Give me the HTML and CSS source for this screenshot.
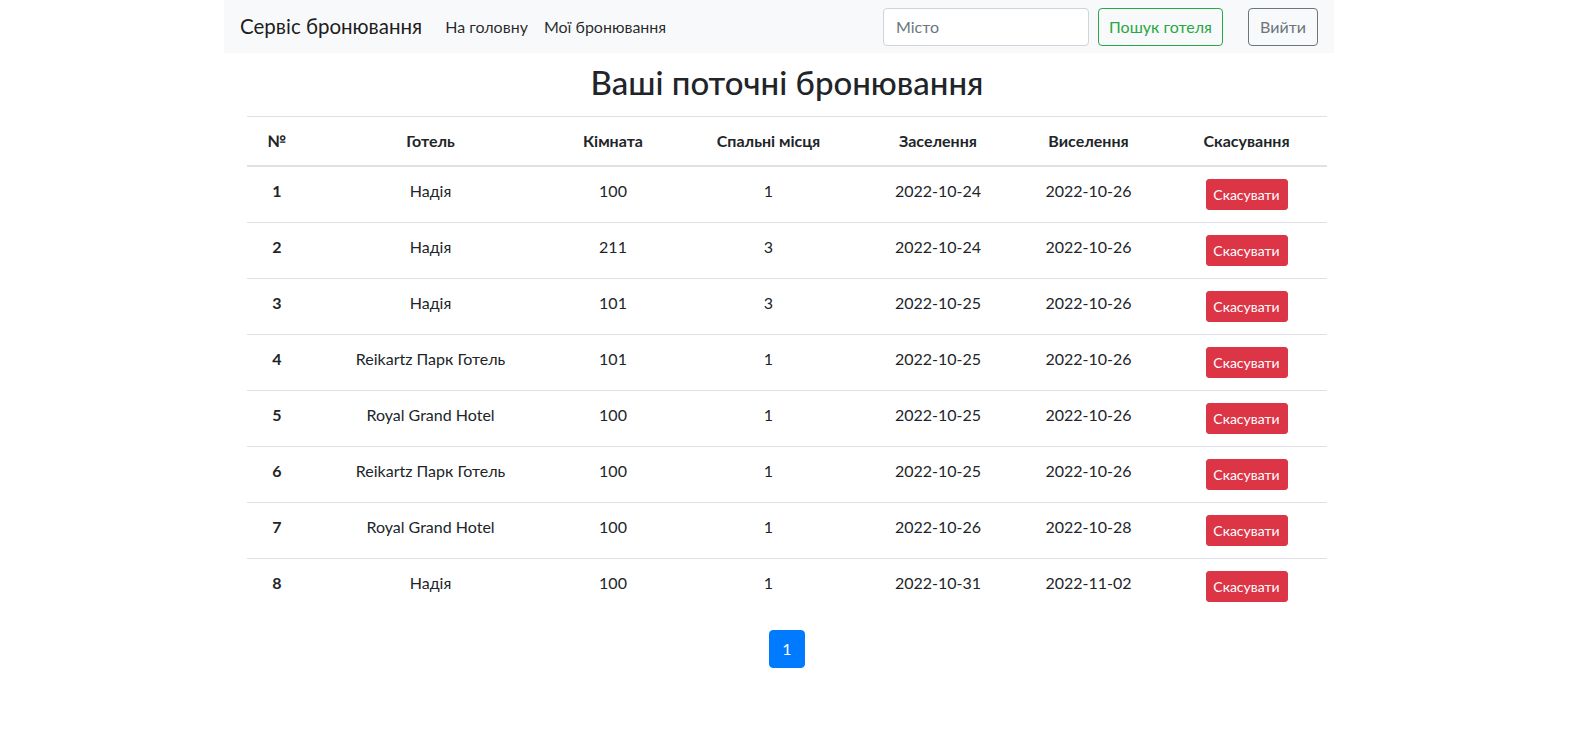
FILE: index.html
```html
<!DOCTYPE html>
<html lang="uk">
<head>
<meta charset="utf-8">
<title>Мої бронювання</title>
<link rel="stylesheet" href="styles.css">
</head>
<body>
<nav class="navbar">
  <a class="brand" href="#">Сервіс бронювання</a>
  <ul class="nav-links">
    <li><a href="#">На головну</a></li>
    <li><a href="#">Мої бронювання</a></li>
  </ul>
  <form class="search">
    <input class="field" type="text" placeholder="Місто">
    <button class="btn btn-success" type="button">Пошук готеля</button>
  </form>
  <button class="btn btn-secondary" type="button">Вийти</button>
</nav>

<main class="content">
  <h2 class="title">Ваші поточні бронювання</h2>
  <table class="bookings">
    <colgroup>
      <col class="c-num"><col class="c-hotel"><col class="c-room"><col class="c-beds"><col class="c-in"><col class="c-out"><col class="c-cancel">
    </colgroup>
    <thead>
      <tr><th>№</th><th>Готель</th><th>Кімната</th><th>Спальні місця</th><th>Заселення</th><th>Виселення</th><th>Скасування</th></tr>
    </thead>
    <tbody>
      <tr><th>1</th><td>Надія</td><td>100</td><td>1</td><td>2022-10-24</td><td>2022-10-26</td><td><button class="btn-cancel" type="button">Скасувати</button></td></tr>
      <tr><th>2</th><td>Надія</td><td>211</td><td>3</td><td>2022-10-24</td><td>2022-10-26</td><td><button class="btn-cancel" type="button">Скасувати</button></td></tr>
      <tr><th>3</th><td>Надія</td><td>101</td><td>3</td><td>2022-10-25</td><td>2022-10-26</td><td><button class="btn-cancel" type="button">Скасувати</button></td></tr>
      <tr><th>4</th><td>Reikartz Парк Готель</td><td>101</td><td>1</td><td>2022-10-25</td><td>2022-10-26</td><td><button class="btn-cancel" type="button">Скасувати</button></td></tr>
      <tr><th>5</th><td>Royal Grand Hotel</td><td>100</td><td>1</td><td>2022-10-25</td><td>2022-10-26</td><td><button class="btn-cancel" type="button">Скасувати</button></td></tr>
      <tr><th>6</th><td>Reikartz Парк Готель</td><td>100</td><td>1</td><td>2022-10-25</td><td>2022-10-26</td><td><button class="btn-cancel" type="button">Скасувати</button></td></tr>
      <tr><th>7</th><td>Royal Grand Hotel</td><td>100</td><td>1</td><td>2022-10-26</td><td>2022-10-28</td><td><button class="btn-cancel" type="button">Скасувати</button></td></tr>
      <tr><th>8</th><td>Надія</td><td>100</td><td>1</td><td>2022-10-31</td><td>2022-11-02</td><td><button class="btn-cancel" type="button">Скасувати</button></td></tr>
    </tbody>
  </table>
  <ul class="pagination">
    <li><a class="page-link active" href="#">1</a></li>
  </ul>
</main>
</body>
</html>
```
FILE: styles.css
```css
* { box-sizing: border-box; }

body {
  margin: 0;
  font-family: Lato, "Noto Sans", sans-serif;
  font-size: 16px;
  line-height: 1.5;
  color: #212529;
  background: #fff;
}

a { text-decoration: none; }

/* Navbar */
.navbar {
  width: 1110px;
  height: 53px;
  margin-left: 224px;
  padding: 0 16px;
  background: #f8f9fa;
  display: flex;
  align-items: center;
}

.brand {
  font-size: 20.5px;
  line-height: 30px;
  color: rgba(0, 0, 0, 0.9);
  margin-right: 15px;
  padding-bottom: 2px;
  white-space: nowrap;
}

.nav-links {
  list-style: none;
  margin: 0;
  padding: 0;
  display: flex;
}

.nav-links a {
  display: block;
  padding: 8px 8px;
  color: rgba(0, 0, 0, 0.85);
  font-size: 16px;
  white-space: nowrap;
}

.search {
  margin: 0 0 0 auto;
  display: flex;
  align-items: center;
  gap: 9px;
}

.field {
  width: 206px;
  height: 38px;
  padding: 6px 12px;
  font: inherit;
  font-size: 16px;
  color: #495057;
  background: #fff;
  border: 1px solid #ced4da;
  border-radius: 4px;
}

.field::placeholder { color: #6c757d; }

.btn {
  height: 38px;
  padding: 6px 0;
  font: inherit;
  font-size: 16px;
  line-height: 24px;
  text-align: center;
  white-space: nowrap;
  background: transparent;
  border: 1px solid;
  border-radius: 4px;
  cursor: pointer;
}

.btn-success {
  color: #28a745;
  border-color: #28a745;
  width: 125px;
}

.btn-secondary {
  color: #6c757d;
  border-color: #6c757d;
  margin-left: 25px;
  width: 70px;
}

/* Content */
.content {
  width: 1080px;
  margin-left: 247px;
}

.title {
  margin: 10px 0 13px;
  font-size: 33px;
  font-weight: 500;
  line-height: 1.2;
  text-align: center;
  color: #212529;
}

.bookings {
  width: 1080px;
  border-collapse: collapse;
  table-layout: fixed;
  text-align: center;
  margin-bottom: 16px;
}

.c-num { width: 60px; }
.c-hotel { width: 247px; }
.c-room { width: 118px; }
.c-beds { width: 193px; }
.c-in { width: 146px; }
.c-out { width: 155px; }
.c-cancel { width: 161px; }

.bookings th,
.bookings td {
  padding: 12px;
  border-top: 1px solid #dee2e6;
  vertical-align: top;
}

.bookings thead th {
  vertical-align: bottom;
  border-bottom: 2px solid #dee2e6;
  font-weight: 700;
}

.bookings tbody th { font-weight: 700; }

.btn-cancel {
  height: 31px;
  padding: 4px 0;
  font: inherit;
  font-size: 14px;
  line-height: 21px;
  white-space: nowrap;
  color: #fff;
  background: #dc3545;
  border: 1px solid #dc3545;
  border-radius: 3px;
  width: 82px;
}

.pagination {
  list-style: none;
  margin: 0;
  padding: 0;
  display: flex;
  justify-content: center;
}

.page-link {
  display: block;
  min-width: 34px;
  height: 38px;
  padding: 8px 12px;
  line-height: 20px;
  text-align: center;
  border-radius: 4px;
  color: #fff;
}

.page-link.active {
  background: #007bff;
  border: 1px solid #007bff;
}
```
